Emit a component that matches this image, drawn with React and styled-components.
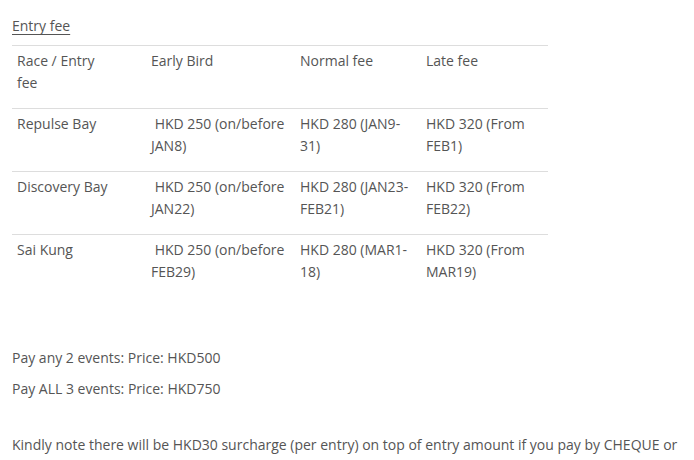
import React from "react";
import styled, { createGlobalStyle } from "styled-components";

const GlobalStyle = createGlobalStyle`
  body {
    margin: 0;
    background: #fff;
    font-family: "Open Sans", "Liberation Sans", sans-serif;
  }
`;

const rows = [
  {
    race: "Repulse Bay",
    early: "\u00a0HKD 250 (on/before JAN8)",
    normal: "HKD 280 (JAN9-31)",
    late: "HKD 320 (From FEB1)",
  },
  {
    race: "Discovery Bay",
    early: "\u00a0HKD 250 (on/before JAN22)",
    normal: "HKD 280 (JAN23-FEB21)",
    late: "HKD 320 (From FEB22)",
  },
  {
    race: "Sai Kung",
    early: "\u00a0HKD 250 (on/before FEB29)",
    normal: "HKD 280 (MAR1-18)",
    late: "HKD 320 (From MAR19)",
  },
];

const App = () => {
  return (
    <Page>
      <GlobalStyle />
      <Title>Entry fee</Title>
      <FeeTable>
        <colgroup>
          <col style={{ width: 134 }} />
          <col style={{ width: 149 }} />
          <col style={{ width: 126 }} />
          <col style={{ width: 127 }} />
        </colgroup>
        <tbody>
          <Row>
            <Cell $first>Race / Entry fee</Cell>
            <Cell>Early Bird</Cell>
            <Cell>Normal fee</Cell>
            <Cell>Late fee</Cell>
          </Row>
          {rows.map((r) => (
            <Row key={r.race}>
              <Cell $first>{r.race}</Cell>
              <Cell>{r.early}</Cell>
              <Cell>{r.normal}</Cell>
              <Cell>{r.late}</Cell>
            </Row>
          ))}
        </tbody>
      </FeeTable>
      <Para $top={50}>Pay any 2 events: Price: HKD500</Para>
      <Para $top={9}>Pay ALL 3 events: Price: HKD750</Para>
      <Para $top={34}>
        Kindly note there will be HKD30 surcharge (per entry) on top of entry
        amount if you pay by CHEQUE or
      </Para>
    </Page>
  );
};
export default App;

const Page = styled.div`
  padding: 15px 12px 0 12px;
  color: #555;
  font-size: 14px;
  line-height: 22px;
  width: 694px;
  height: 460px;
  overflow: hidden;
  box-sizing: border-box;
`;

const Title = styled.p`
  margin: 0 0 8px;
  text-decoration: underline;
  text-underline-offset: 3px;
`;

const FeeTable = styled.table`
  border-collapse: collapse;
  table-layout: fixed;
  width: 536px;
`;

const Row = styled.tr`
  border-top: 1px solid #ddd;
`;

const Cell = styled.td`
  padding: 4px ${(p) => (p.$first ? 35 : 5)}px 14px 5px;
  vertical-align: top;
  text-align: left;
`;

const Para = styled.p`
  margin: ${(p) => p.$top}px 0 0;
  white-space: nowrap;
`;
